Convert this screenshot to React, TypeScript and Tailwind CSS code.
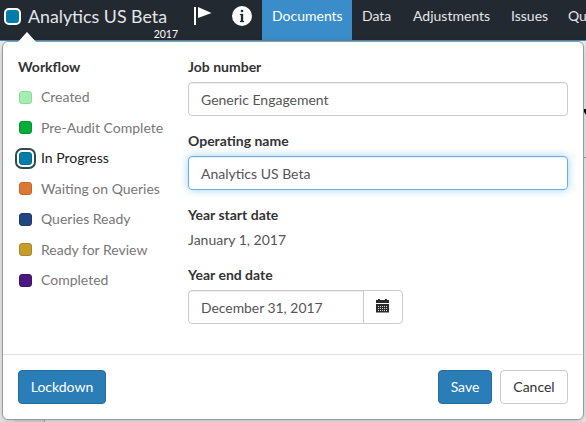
import type { ReactNode } from "react";

const statuses = [
  { name: "Created", color: "bg-[#a3f0ae] border-[#8fd79a]" },
  { name: "Pre-Audit Complete", color: "bg-[#03ad3a] border-[#039532]" },
  { name: "In Progress", color: "bg-[#037ca9] border-[#036d95]", active: true },
  { name: "Waiting on Queries", color: "bg-[#dd7833] border-[#c0682c]" },
  { name: "Queries Ready", color: "bg-[#22467f] border-[#1d3c6e]" },
  { name: "Ready for Review", color: "bg-[#c69c2b] border-[#aa8625]" },
  { name: "Completed", color: "bg-[#4b187f] border-[#40146d]" },
];

function Header() {
  return (
    <header className="flex h-[41px] w-[660px] border-b border-[#3a8dc8] bg-[#222930] text-[#e4e6e8]">
      <div className="flex w-[182px] shrink-0 pl-1 pt-2">
        <span className="h-[17px] w-[17px] shrink-0 rounded-[5px] border-2 border-white bg-[#037ca9]" />
        <div className="ml-[7px] w-[150px]">
          <div className="-mt-[3px] whitespace-nowrap text-[17.8px] leading-[23px]">Analytics US Beta</div>
          <div className="text-right text-[10.5px] leading-[13px] text-white">2017</div>
        </div>
      </div>
      <div className="flex w-20 shrink-0 pl-3 pt-[6px]">
        <svg className="h-[19px] w-[19px]" viewBox="0 0 19 19" fill="white">
          <path d="M0 1h2v18H0zM4 1l13.500 6L4 12z" />
        </svg>
        <svg className="ml-[19px] h-5 w-5" viewBox="0 0 20 20">
          <circle cx="10" cy="10" r="10" fill="white" />
          <path d="M9 4h2v2H9zM8 8h3v7h1v1H8v-1h1V9H8z" fill="#222930" stroke="#222930" strokeWidth="0.300" />
        </svg>
      </div>
      <nav className="flex text-[14px] leading-5">
        <span className="w-[90px] bg-[#3a8dc8] pl-[10px] pt-[6px] text-white">Documents</span>
        <span className="w-[50px] pl-[10px] pt-[6px]">Data</span>
        <span className="w-[98px] pl-[11px] pt-[6px]">Adjustments</span>
        <span className="w-[58px] pl-[11px] pt-[6px]">Issues</span>
        <span className="pl-[10px] pt-[6px]">Queries</span>
      </nav>
    </header>
  );
}

function Label({ children }: { children: ReactNode }) {
  return <div className="h-5 font-bold leading-5 text-[#333]">{children}</div>;
}

function Calendar() {
  return (
    <svg className="-mt-[2px] mr-px h-[14px] w-[13px]" viewBox="0 0 13 14" fill="#2b2b2b">
      <path d="M0 1h2V0h2v1h5V0h2v1h2v3H0z" />
      <path d="M0 5h13v8.500H0z" />
      <path d="M2 7.500h9M2 9.500h9M2 11.500h9" stroke="#d9dde0" strokeWidth="1" strokeDasharray="1 1" />
    </svg>
  );
}

function Workflow() {
  return (
    <section className="w-[170px] pt-[15px]">
      <Label>Workflow</Label>
      <ul className="mt-[5px]">
        {statuses.map((s) => (
          <li key={s.name} className="flex h-[30.5px] items-center">
            <span
              className={
                s.active
                  ? "-ml-[3px] mr-[2px] flex h-[21px] w-[21px] items-center justify-center rounded-[7px] border-2 border-[#2a4b50] bg-white"
                  : "mr-[5px] flex h-[21px] w-[16px] items-center pl-px"
              }
            >
              <span className={`h-[13px] w-[13px] shrink-0 rounded-[3px] border ${s.color}`} />
            </span>
            <span className={s.active ? "ml-[3px] text-[#222]" : "ml-[2px] text-[#777]"}>{s.name}</span>
          </li>
        ))}
      </ul>
    </section>
  );
}

export default function App() {
  return (
    <div className="relative h-[422px] w-[586px] overflow-hidden bg-[#ececec] font-[Lato,sans-serif]">
      <Header />
      <div className="absolute left-[14px] top-[419px] h-[3px] w-[31px] border-r border-[#aaa] bg-[#ddd]" />
      <div className="absolute left-[584px] top-[157px] h-px w-[2px] bg-[#999]" />
      <svg className="absolute left-[584px] top-[109px] h-[6px] w-[2px]" viewBox="0 0 2 6">
        <path d="M0 0h2v6L0 3z" />
      </svg>
      <div className="absolute left-[2px] top-[41px] flex h-[379px] w-[582px] flex-col rounded-[6px] border border-[#9b9b9b] bg-white text-[14px] leading-5 shadow-[0_3px_8px_rgba(0,0,0,0.2)]">
        <svg className="absolute -top-[10px] left-[14px] h-[11px] w-5" viewBox="0 0 20 11" fill="white">
          <path d="M0 11L10 0l10 11z" />
        </svg>
        <div className="flex h-[313px] border-b border-[#e2e2e2] pl-[15px]">
          <Workflow />
          <section className="w-[380px] pt-[15px]">
            <Label>Job number</Label>
            <input
              className="mt-[5px] block h-[34px] w-full rounded-[4px] border border-[#ccc] px-3 text-[#555] shadow-[inset_0_1px_1px_rgba(0,0,0,0.075)] outline-none"
              defaultValue="Generic Engagement"
            />
            <div className="h-[15px]" />
            <Label>Operating name</Label>
            <input
              className="mt-[5px] block h-[34px] w-full rounded-[4px] border border-[#66afe9] px-3 text-[#555] shadow-[inset_0_1px_1px_rgba(0,0,0,0.075),0_0_8px_rgba(102,175,233,0.6)] outline-none"
              defaultValue="Analytics US Beta"
            />
            <div className="h-[15px]" />
            <Label>Year start date</Label>
            <div className="mt-[5px] text-[#555]">January 1, 2017</div>
            <div className="h-[15px]" />
            <Label>Year end date</Label>
            <div className="mt-[5px] flex h-[34px] w-[215px] overflow-hidden rounded-[4px] border border-[#ccc]">
              <input
                className="w-[175px] border-r border-[#ccc] px-3 pt-px text-[13.900px] text-[#555] shadow-[inset_0_1px_1px_rgba(0,0,0,0.075)] outline-none"
                defaultValue="December 31, 2017"
              />
              <button className="flex flex-1 items-center justify-center">
                <Calendar />
              </button>
            </div>
          </section>
        </div>
        <footer className="flex pl-[15px] pr-[15px] pt-[15px]">
          <button className="h-[34px] w-[88px] rounded-[4px] border border-[#256c9f] bg-[#2b7db7] text-white">Lockdown</button>
          <button className="ml-auto h-[34px] w-[54px] rounded-[4px] border border-[#256c9f] bg-[#2b7db7] text-white">Save</button>
          <button className="ml-2 h-[34px] w-[68px] rounded-[4px] border border-[#ccc] bg-white text-[#333]">Cancel</button>
        </footer>
      </div>
    </div>
  );
}
